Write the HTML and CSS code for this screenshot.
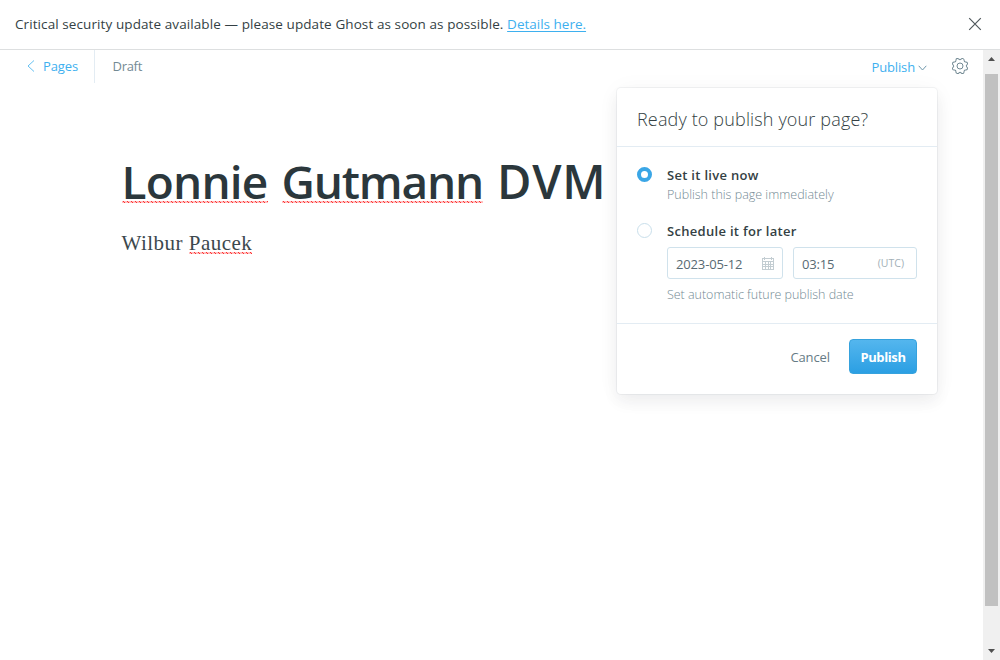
FILE: index.html
```
<!DOCTYPE html>
<html lang="en">
<head>
<meta charset="utf-8">
<title>Editor</title>
<link rel="stylesheet" href="styles.css">
</head>
<body>
<div class="alert">
  <p class="alert-text"><span>Critical security update available — please update Ghost as soon as possible.</span> <a class="alert-link">Details here.</a></p>
  <svg class="alert-close" width="14" height="14" viewBox="0 0 14 14"><path d="M1.2 1.2l11.6 11.6M12.8 1.2L1.2 12.8"/></svg>
</div>
<div class="viewport">
  <main class="editor">
    <header class="toolbar">
      <div class="back"><svg width="8" height="12" viewBox="0 0 8 12"><path d="M7 .5L1 6l6 5.500"/></svg><span class="back-label">Pages</span></div>
      <span class="status">Draft</span>
      <div class="publish-trigger"><span class="trigger-label">Publish</span><svg width="9" height="6" viewBox="0 0 9 6"><path d="M.7 .8l3.800 4.200L8.300 .8"/></svg></div>
      <svg class="gear" width="18" height="18" viewBox="0 0 18 18"><path transform="rotate(22.5 9 9)" d="M7.300 2.300Q7.700 1 9 1T10.700 2.300Q11.300 3.700 12.600 3.200Q13.900 2.600 14.700 3.300T14.900 5.400Q14.300 6.700 15.600 7.300Q17 7.700 17 9T15.600 10.700Q14.300 11.300 14.900 12.600Q15.500 13.900 14.700 14.700T12.600 14.900Q11.300 14.300 10.700 15.700Q10.300 17 9 17T7.300 15.700Q6.700 14.300 5.400 14.900Q4.100 15.500 3.300 14.700T3.100 12.600Q3.700 11.300 2.400 10.700Q1 10.300 1 9T2.400 7.300Q3.700 6.700 3.100 5.400Q2.500 4.100 3.300 3.300T5.400 3.100Q6.700 3.700 7.300 2.300Z"/><circle cx="9" cy="9" r="3"/></svg>
    </header>
    <article class="post">
      <h1 class="post-title"><span class="misspelled">Lonnie</span><span class="misspelled surname">Gutmann</span><span class="plain">DVM</span></h1>
      <p class="post-body">Wilbur <span class="misspelled">Paucek</span></p>
    </article>
    <section class="menu">
      <h2 class="menu-head"><span>Ready to publish your page?</span></h2>
      <div class="menu-options">
        <div class="option">
          <i class="radio radio-on"></i>
          <div class="option-text"><b class="option-label">Set it live now</b><span class="option-note">Publish this page immediately</span></div>
        </div>
        <div class="option">
          <i class="radio"></i>
          <div class="option-text">
            <b class="option-label">Schedule it for later</b>
            <div class="fields">
              <div class="field field-date"><span class="value">2023-05-12</span><svg width="12" height="13" viewBox="0 0 12 13" shape-rendering="crispEdges"><path d="M.5 1.500h11v11H.5zM0 4.500h12M0 7.500h12M0 9.500h12M3.500 4v9M6.500 4v9M8.500 4v9"/><path d="M2.500 0v3M9.500 0v3"/></svg></div>
              <div class="field field-time"><span class="value">03:15</span><span class="zone">(UTC)</span></div>
            </div>
            <span class="option-note note-later">Set automatic future publish date</span>
          </div>
        </div>
      </div>
      <footer class="menu-foot"><span class="cancel">Cancel</span><button class="confirm"><span>Publish</span></button></footer>
    </section>
  </main>
  <div class="scrollbar">
    <svg width="17" height="24" viewBox="0 0 17 24"><path d="M5 11h7L8.500 7z"/></svg>
    <div class="thumb"></div>
    <svg width="17" height="17" viewBox="0 0 17 17"><path d="M5 6h7l-3.500 4z"/></svg>
  </div>
</div>
</body>
</html>
```
FILE: styles.css
```
* { box-sizing: border-box; margin: 0; padding: 0; }
body { width: 1000px; height: 660px; overflow: hidden; display: flex; flex-direction: column; background: #fff; color: #343f44; font: 13px/20px "Segoe UI", "Open Sans", "Noto Sans", sans-serif; }
svg { display: block; fill: none; stroke: currentColor; flex: none; }
span, a, b { white-space: nowrap; }

.alert { height: 50px; flex: none; display: flex; align-items: center; justify-content: space-between; padding: 0 18px 2px 15px; border-bottom: 1px solid #dddfe0; }
.alert-text { font-size: 13.500px; letter-spacing: .09px; }
.alert-link { color: #3eb0ef; text-decoration: underline; text-underline-offset: 2px; letter-spacing: 0; }
.alert-close { color: #50585c; stroke-width: 1.200; }

.viewport { flex: 1; display: flex; min-height: 0; }
.editor { flex: 1; position: relative; }
.toolbar { display: flex; align-items: flex-start; height: 34px; padding-right: 14px; }
.back { display: flex; align-items: center; gap: 8px; width: 95px; height: 33px; padding: 0 0 1px 27px; border-right: 1px solid #e3ecf3; color: #3eb0ef; }
.back svg { stroke-width: .8; }
.back-label { letter-spacing: -.1px; }
.status { padding: 6px 0 0 17.500px; color: #738a94; letter-spacing: -.3px; }
.publish-trigger { display: flex; align-items: center; gap: 3px; margin: 7px 24px 0 auto; color: #3eb0ef; }
.trigger-label { letter-spacing: -.15px; }
.publish-trigger svg { color: #6f98ac; margin-top: 2px; }
.gear { margin-top: 7px; color: #738a94; }

.post { padding: 68px 121.500px 0; }
.post-title { display: flex; gap: 14px; white-space: nowrap; color: #2b373c; font-size: 46px; font-weight: 600; line-height: 58px; letter-spacing: -.8px; }
.surname { letter-spacing: -1.200px; }
.plain { font-size: 47px; letter-spacing: .8px; }
.post-body { margin-top: 14px; font: 21px/38px Georgia, "Liberation Serif", serif; letter-spacing: .48px; color: #3c484d; }
.misspelled { background: url("data:image/svg+xml,%3Csvg xmlns='http://www.w3.org/2000/svg' width='4' height='2'%3E%3Cpath d='M0 1.500L1 .5L3 1.500L4 .5' fill='none' stroke='red'/%3E%3C/svg%3E") repeat-x 0 100%; }
.post-title .misspelled { background-position: 0 49px; }
.post-body .misspelled { background-position: 0 21px; }

/* The menu drops down over the page content. */
.menu { position: absolute; top: 38px; left: 617px; width: 320px; height: 306px; border-radius: 4px; background: #fff; box-shadow: 0 0 0 1px rgba(99,114,130,.08), 0 8px 16px rgba(27,39,51,.06), 0 2px 24px rgba(27,39,51,.04); }
.menu-head { height: 59px; padding: 17px 20px 0; border-bottom: 1px solid #e3ecf3; font-size: 18px; line-height: 28px; font-weight: 300; letter-spacing: .15px; color: #343f44; }
.menu-options { height: 177px; padding: 18px 20px 0; border-bottom: 1px solid #e3ecf3; display: flex; flex-direction: column; gap: 16px; }
.option { display: flex; gap: 15px; }
.radio { width: 15px; height: 15px; margin-top: 2px; border: 1px solid #c9dfeb; border-radius: 50%; flex: none; }
.radio-on { border: 4px solid #3aa6e6; }
.option-text { display: flex; flex-direction: column; align-items: flex-start; }
.option-label { font-size: 13px; line-height: 20px; font-weight: 600; letter-spacing: .3px; }
.option-note { font-size: 12.500px; line-height: 20px; font-weight: 300; color: #738a94; }
.note-later { letter-spacing: -.03px; }
.fields { display: flex; gap: 10px; margin: 6px 0; }
.field { height: 32px; display: flex; align-items: center; justify-content: space-between; border: 1px solid #d0e2ec; border-radius: 3px; padding: 0 8px; color: #586a73; }
.value { padding-top: 2px; letter-spacing: -.15px; }
.field-date { width: 116px; }
.field svg { color: #c3cdd2; }
.field-time { width: 124px; padding-right: 12px; }
.zone { font-size: 10.500px; color: #a2b0b7; }
.menu-foot { display: flex; align-items: center; justify-content: flex-end; gap: 19px; padding: 15px 20px 0; }
.cancel { color: #667b85; letter-spacing: -.1px; }
.confirm { width: 68px; height: 35px; border: 1px solid #36a2dd; border-radius: 4px; background: linear-gradient(#54b6ee, #2b9fe3); color: #fff; font: 700 13px/20px "Segoe UI", "Open Sans", "Noto Sans", sans-serif; letter-spacing: -.4px; }

.scrollbar { width: 17px; display: flex; flex-direction: column; align-items: center; background: #f0f0f0; }
.scrollbar svg { fill: #505050; stroke: none; }
.thumb { width: 13px; height: 532px; background: #c1c1c1; margin-bottom: 37px; }
```
